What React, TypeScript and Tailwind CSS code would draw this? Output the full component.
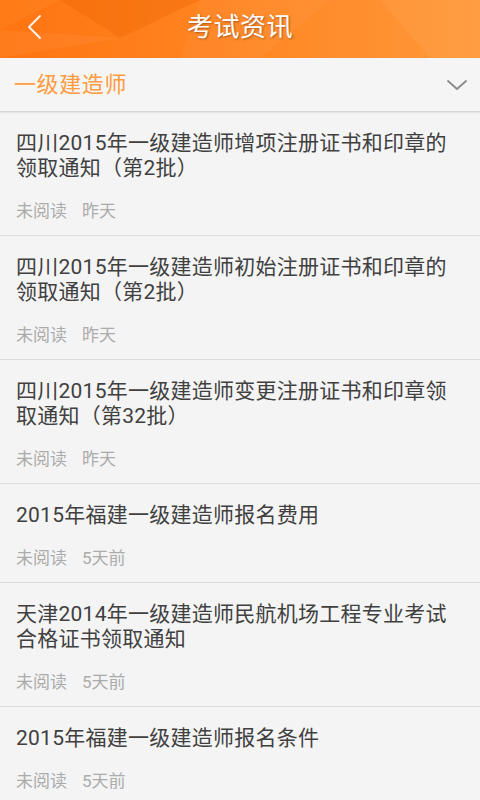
import React from 'react';

type NewsItem = {
  lines: string[];
  time: string;
};

const news: NewsItem[] = [
  { lines: ['四川2015年一级建造师增项注册证书和印章的', '领取通知（第2批）'], time: '昨天' },
  { lines: ['四川2015年一级建造师初始注册证书和印章的', '领取通知（第2批）'], time: '昨天' },
  { lines: ['四川2015年一级建造师变更注册证书和印章领', '取通知（第32批）'], time: '昨天' },
  { lines: ['2015年福建一级建造师报名费用'], time: '5天前' },
  { lines: ['天津2014年一级建造师民航机场工程专业考试', '合格证书领取通知'], time: '5天前' },
  { lines: ['2015年福建一级建造师报名条件'], time: '5天前' },
];

const HeaderFacets: React.FC = () => (
  <svg className="absolute inset-0 h-full w-full" viewBox="0 0 480 58" preserveAspectRatio="none">
    <polygon points="60,0 200,0 120,38" fill="#e85f00" opacity="0.3" />
    <polygon points="0,0 60,0 0,30" fill="#ff8a2a" opacity="0.3" />
    <polygon points="200,0 330,0 260,58 180,58" fill="#ffffff" opacity="0.04" />
    <polygon points="380,0 480,0 480,58 430,58" fill="#ffffff" opacity="0.05" />
    <polygon points="0,30 120,38 0,58" fill="#ffffff" opacity="0.05" />
  </svg>
);

const App: React.FC = () => {
  return (
    <div
      className="flex h-[800px] w-[480px] flex-col overflow-hidden bg-[#f4f4f4]"
      style={{ fontFamily: 'Roboto, "Noto Sans CJK SC", sans-serif' }}
    >
      <header className="relative flex h-[58px] shrink-0 items-center justify-center bg-gradient-to-r from-[#ff7410] via-[#ff8622] to-[#ff9838]">
        <HeaderFacets />
        <button type="button" className="absolute left-[24px] top-[13px] flex h-[28px] w-[20px] items-center justify-center">
          <svg width="16" height="26" viewBox="0 0 16 26" fill="none">
            <path d="M14 2 L3 13 L14 24" stroke="#ffffff" strokeWidth="2" strokeLinecap="round" strokeLinejoin="round" opacity="0.9" />
          </svg>
        </button>
        <h1 className="relative -mt-[4px] text-[26px] leading-none tracking-[0.5px] text-white [text-shadow:1px_1px_2px_rgba(0,0,0,0.35)]">
          考试资讯
        </h1>
      </header>

      <div className="flex h-[54px] shrink-0 items-center justify-between border-b border-[#d6d6d6] bg-[#f5f5f5] pl-[14px] pr-[12px] shadow-[0_1px_1px_rgba(0,0,0,0.06)]">
        <span className="text-[22px] leading-none tracking-[0.6px] text-[#ff9b40]">一级建造师</span>
        <svg width="22" height="14" viewBox="0 0 22 14" fill="none">
          <path d="M2 3 L11 11 L20 3" stroke="#8a8a8a" strokeWidth="1.8" strokeLinecap="round" strokeLinejoin="round" />
        </svg>
      </div>

      <ul className="flex flex-col">
        {news.map((item, i) => (
          <li key={i} className="border-b border-[#dcdcdc] pb-[14px] pl-[16px] pr-[12px] pt-[19px]">
            <div className="text-[21px] leading-[25px] tracking-[0.25px] text-[#404040]">
              {item.lines.map((line, j) => (
                <div key={j} className="whitespace-nowrap">
                  {line}
                </div>
              ))}
            </div>
            <div className="mt-[20px] flex gap-[15px] text-[17px] leading-[20px] text-[#ababab]">
              <span>未阅读</span>
              <span>{item.time}</span>
            </div>
          </li>
        ))}
      </ul>
    </div>
  );
};

export default App;
